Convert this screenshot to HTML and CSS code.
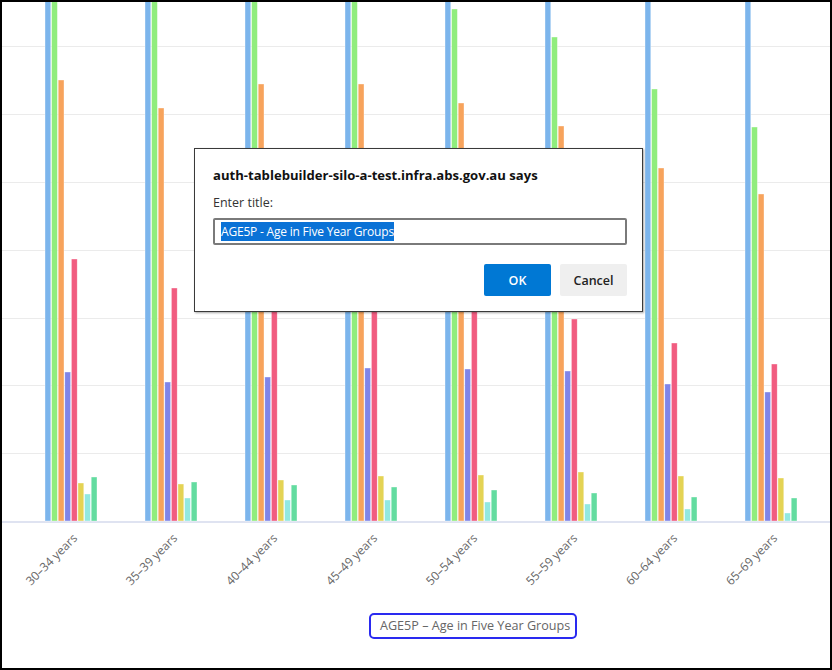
FILE: index.html
```html
<!DOCTYPE html>
<html lang="en">
<head>
<meta charset="utf-8">
<title>Chart</title>
<link rel="stylesheet" href="styles.css">
</head>
<body>
<div class="frame">
  <svg class="chart" width="828" height="600" viewBox="2 2 828 600" xmlns="http://www.w3.org/2000/svg">
    <g class="grid">
      <line x1="0" x2="832" y1="46.5" y2="46.5"/>
      <line x1="0" x2="832" y1="114.5" y2="114.5"/>
      <line x1="0" x2="832" y1="182.5" y2="182.5"/>
      <line x1="0" x2="832" y1="250.5" y2="250.5"/>
      <line x1="0" x2="832" y1="318.5" y2="318.5"/>
      <line x1="0" x2="832" y1="385.5" y2="385.5"/>
      <line x1="0" x2="832" y1="453.5" y2="453.5"/>
    </g>
    <line class="axis" x1="0" x2="832" y1="522" y2="522"/>
    <g class="bars" transform="translate(45 0)">
      <rect class="s0" x="0" y="0" width="5.8" height="521"/>
      <rect class="s1" x="6.6" y="0" width="5.8" height="521"/>
      <rect class="s2" x="13.2" y="80" width="5.8" height="441"/>
      <rect class="s3" x="19.8" y="372" width="5.8" height="149"/>
      <rect class="s4" x="26.4" y="259" width="5.8" height="262"/>
      <rect class="s5" x="33" y="483" width="5.8" height="38"/>
      <rect class="s6" x="39.6" y="494" width="5.8" height="27"/>
      <rect class="s7" x="46.2" y="477" width="5.8" height="44"/>
    </g>
    <g class="bars" transform="translate(145 0)">
      <rect class="s0" x="0" y="0" width="5.8" height="521"/>
      <rect class="s1" x="6.6" y="0" width="5.8" height="521"/>
      <rect class="s2" x="13.2" y="108" width="5.8" height="413"/>
      <rect class="s3" x="19.8" y="382" width="5.8" height="139"/>
      <rect class="s4" x="26.4" y="288" width="5.8" height="233"/>
      <rect class="s5" x="33" y="484" width="5.8" height="37"/>
      <rect class="s6" x="39.6" y="498" width="5.8" height="23"/>
      <rect class="s7" x="46.2" y="482" width="5.8" height="39"/>
    </g>
    <g class="bars" transform="translate(245 0)">
      <rect class="s0" x="0" y="0" width="5.8" height="521"/>
      <rect class="s1" x="6.6" y="0" width="5.8" height="521"/>
      <rect class="s2" x="13.2" y="84" width="5.8" height="437"/>
      <rect class="s3" x="19.8" y="377" width="5.8" height="144"/>
      <rect class="s4" x="26.4" y="270" width="5.8" height="251"/>
      <rect class="s5" x="33" y="480" width="5.8" height="41"/>
      <rect class="s6" x="39.6" y="500" width="5.8" height="21"/>
      <rect class="s7" x="46.2" y="485" width="5.8" height="36"/>
    </g>
    <g class="bars" transform="translate(345 0)">
      <rect class="s0" x="0" y="0" width="5.8" height="521"/>
      <rect class="s1" x="6.6" y="0" width="5.8" height="521"/>
      <rect class="s2" x="13.2" y="84" width="5.8" height="437"/>
      <rect class="s3" x="19.8" y="368" width="5.8" height="153"/>
      <rect class="s4" x="26.4" y="280" width="5.8" height="241"/>
      <rect class="s5" x="33" y="476" width="5.8" height="45"/>
      <rect class="s6" x="39.6" y="500" width="5.8" height="21"/>
      <rect class="s7" x="46.2" y="487" width="5.8" height="34"/>
    </g>
    <g class="bars" transform="translate(445 0)">
      <rect class="s0" x="0" y="0" width="5.8" height="521"/>
      <rect class="s1" x="6.6" y="9" width="5.8" height="512"/>
      <rect class="s2" x="13.2" y="103" width="5.8" height="418"/>
      <rect class="s3" x="19.8" y="369" width="5.8" height="152"/>
      <rect class="s4" x="26.4" y="300" width="5.8" height="221"/>
      <rect class="s5" x="33" y="475" width="5.8" height="46"/>
      <rect class="s6" x="39.6" y="502" width="5.8" height="19"/>
      <rect class="s7" x="46.2" y="490" width="5.8" height="31"/>
    </g>
    <g class="bars" transform="translate(545 0)">
      <rect class="s0" x="0" y="0" width="5.8" height="521"/>
      <rect class="s1" x="6.6" y="37" width="5.8" height="484"/>
      <rect class="s2" x="13.2" y="126" width="5.8" height="395"/>
      <rect class="s3" x="19.8" y="371" width="5.8" height="150"/>
      <rect class="s4" x="26.4" y="319" width="5.8" height="202"/>
      <rect class="s5" x="33" y="472" width="5.8" height="49"/>
      <rect class="s6" x="39.6" y="504" width="5.8" height="17"/>
      <rect class="s7" x="46.2" y="493" width="5.8" height="28"/>
    </g>
    <g class="bars" transform="translate(645 0)">
      <rect class="s0" x="0" y="0" width="5.8" height="521"/>
      <rect class="s1" x="6.6" y="89" width="5.8" height="432"/>
      <rect class="s2" x="13.2" y="168" width="5.8" height="353"/>
      <rect class="s3" x="19.8" y="384" width="5.8" height="137"/>
      <rect class="s4" x="26.4" y="343" width="5.8" height="178"/>
      <rect class="s5" x="33" y="476" width="5.8" height="45"/>
      <rect class="s6" x="39.6" y="509" width="5.8" height="12"/>
      <rect class="s7" x="46.2" y="497" width="5.8" height="24"/>
    </g>
    <g class="bars" transform="translate(745 0)">
      <rect class="s0" x="0" y="0" width="5.8" height="521"/>
      <rect class="s1" x="6.6" y="127" width="5.8" height="394"/>
      <rect class="s2" x="13.2" y="194" width="5.8" height="327"/>
      <rect class="s3" x="19.8" y="392" width="5.8" height="129"/>
      <rect class="s4" x="26.4" y="364" width="5.8" height="157"/>
      <rect class="s5" x="33" y="478" width="5.8" height="43"/>
      <rect class="s6" x="39.6" y="513" width="5.8" height="8"/>
      <rect class="s7" x="46.2" y="498" width="5.8" height="23"/>
    </g>
    <g class="labels">
      <text x="78" y="539" transform="rotate(-45 78 539)">30–34 years</text>
      <text x="178" y="539" transform="rotate(-45 178 539)">35–39 years</text>
      <text x="278" y="539" transform="rotate(-45 278 539)">40–44 years</text>
      <text x="378" y="539" transform="rotate(-45 378 539)">45–49 years</text>
      <text x="478" y="539" transform="rotate(-45 478 539)">50–54 years</text>
      <text x="578" y="539" transform="rotate(-45 578 539)">55–59 years</text>
      <text x="678" y="539" transform="rotate(-45 678 539)">60–64 years</text>
      <text x="778" y="539" transform="rotate(-45 778 539)">65–69 years</text>
    </g>
  </svg>
  <div class="title-row">
    <div class="chart-title">AGE5P – Age in Five Year Groups</div>
  </div>

  <div class="dialog">
    <div class="dialog-heading">auth-tablebuilder-silo-a-test.infra.abs.gov.au says</div>
    <div class="dialog-label">Enter title:</div>
    <div class="dialog-input"><span class="selected">AGE5P - Age in Five Year Groups</span></div>
    <div class="dialog-buttons">
      <button class="btn btn-ok">OK</button>
      <button class="btn btn-cancel">Cancel</button>
    </div>
  </div>
</div>
</body>
</html>
```

FILE: styles.css
```css
html, body {
  margin: 0;
  padding: 0;
  background: #fff;
}

.frame {
  position: relative;
  width: 832px;
  height: 670px;
  box-sizing: border-box;
  border: 2px solid #000;
  overflow: hidden;
  font-family: "Open Sans", "Noto Sans", sans-serif;
}

.chart {
  display: block;
}

.grid line {
  stroke: #ebebeb;
  stroke-width: 1;
}

.axis {
  stroke: #dfe3f1;
  stroke-width: 2;
}

.bars rect {
  stroke: rgba(255, 255, 255, 0.6);
  stroke-width: 0.6;
}

.s0 { fill: #7cb5ec; }
.s1 { fill: #90ed7d; }
.s2 { fill: #f7a35c; }
.s3 { fill: #8085e9; }
.s4 { fill: #f15c80; }
.s5 { fill: #e4d354; }
.s6 { fill: #91e8e1; }
.s7 { fill: #63dca0; }

.labels text {
  font-family: "Open Sans", "Noto Sans", sans-serif;
  font-size: 12px;
  fill: #666;
  text-anchor: end;
}

.title-row {
  display: flex;
  padding-top: 11px;
  padding-left: 367px;
}

.chart-title {
  border: 2px solid #2a2af0;
  border-radius: 5px;
  padding: 1px 5px 2px 9px;
  font-size: 12.6px;
  line-height: 19px;
  color: #666;
}

.dialog {
  position: absolute;
  left: 192px;
  top: 146px;
  width: 449px;
  height: 164px;
  box-sizing: border-box;
  border: 1px solid #3a3a3a;
  box-shadow: 1px 1px 2px rgba(0, 0, 0, 0.35);
  background: #fff;
  padding: 16px 15px 0 18px;
  display: flex;
  flex-direction: column;
  font-family: "Open Sans", "Noto Sans", sans-serif;
}

.dialog-heading {
  font-size: 13.1px;
  font-weight: 700;
  line-height: 20px;
  color: #111;
}

.dialog-label {
  margin-top: 9px;
  font-size: 12.5px;
  line-height: 18px;
  color: #333;
}

.dialog-input {
  margin-top: 6px;
  height: 27px;
  box-sizing: border-box;
  border: 2px solid #7a7a7a;
  border-radius: 2px;
  padding: 2px 6px;
  font-size: 12px;
  letter-spacing: -0.2px;
  line-height: 19px;
  color: #fff;
}

.selected {
  background: #0a72d6;
  color: #fff;
  padding: 1px 0;
}

.dialog-buttons {
  display: flex;
  justify-content: flex-end;
  gap: 9px;
  margin-top: 19px;
}

.btn {
  width: 67px;
  height: 32px;
  border: none;
  border-radius: 2px;
  font-family: "Open Sans", "Noto Sans", sans-serif;
  font-size: 12.5px;
  font-weight: 600;
  padding: 0;
}

.btn-ok {
  background: #0078d4;
  color: #fff;
}

.btn-cancel {
  background: #efefef;
  color: #222;
}
```
